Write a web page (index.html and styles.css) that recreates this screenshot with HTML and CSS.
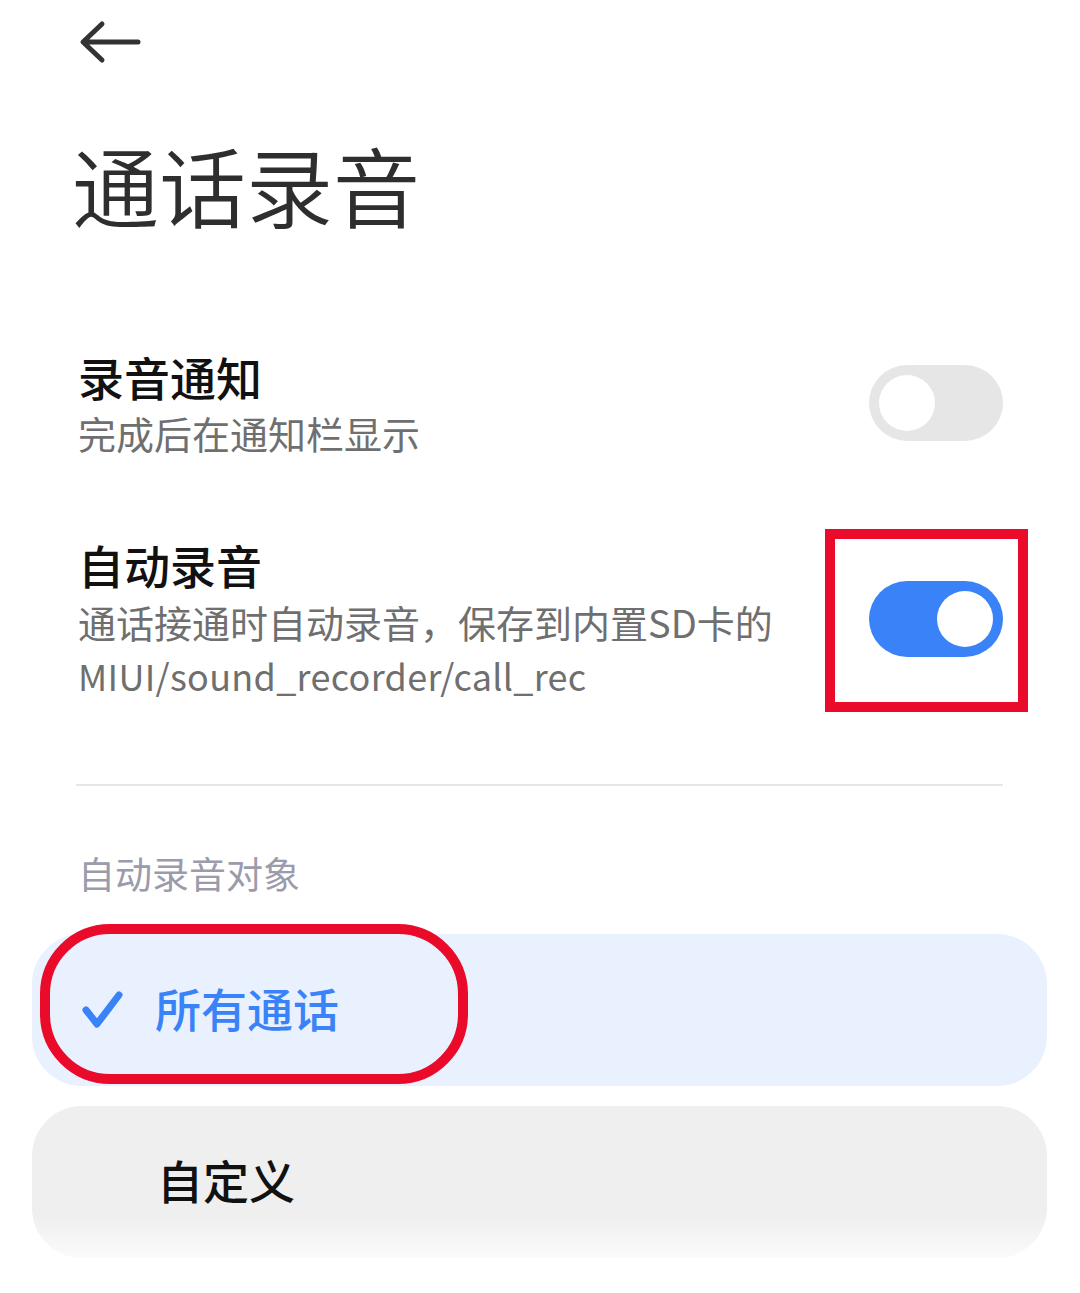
FILE: index.html
```html
<!DOCTYPE html>
<html lang="zh-CN">
<head>
  <meta charset="UTF-8">
  <meta name="viewport" content="width=device-width, initial-scale=1.0">
  <title>通话录音</title>
  <link rel="stylesheet" href="styles.css">
</head>
<body>
  <div class="page">
    <div class="topbar">
      <svg class="back" width="64" height="44" viewBox="0 0 64 44">
        <path d="M60 22 H6 M24 4 L5 22 L24 40" fill="none" stroke="#333" stroke-width="5" stroke-linecap="round" stroke-linejoin="round"/>
      </svg>
    </div>
    <h1 class="title">通话录音</h1>

    <div class="setting first">
      <div class="setting-text">
        <div class="setting-name">录音通知</div>
        <div class="setting-desc">完成后在通知栏显示</div>
      </div>
      <div class="switch"><span class="knob"></span></div>
    </div>

    <div class="setting second">
      <div class="setting-text">
        <div class="setting-name">自动录音</div>
        <div class="setting-desc">通话接通时自动录音，保存到内置SD卡的<br><span class="path">MIUI/sound_recorder/call_rec</span></div>
      </div>
      <div class="switch on">
        <span class="knob"></span>
        <span class="mark-box"></span>
      </div>
    </div>

    <div class="divider"></div>

    <div class="group-label">自动录音对象</div>

    <div class="options">
      <div class="option selected">
        <svg class="check" width="44" height="40" viewBox="0 0 44 40">
          <path d="M5 20 L16 34 L38 5" fill="none" stroke="#3a82f7" stroke-width="7" stroke-linecap="round" stroke-linejoin="round"/>
        </svg>
        <span class="option-label">所有通话</span>
        <span class="mark-oval"></span>
      </div>
      <div class="option">
        <span class="option-label">自定义</span>
      </div>
    </div>
  </div>
  <div class="fade"></div>
</body>
</html>
```

FILE: styles.css
```css
body {
  margin: 0;
  padding: 0;
  background: #fff;
  font-family: "Noto Sans CJK SC", "Noto Sans", sans-serif;
  color: #111;
  overflow: hidden;
}
.page {
  width: 1080px;
  height: 1293px;
}
.topbar {
  padding: 20px 0 0 78px;
  height: 50px;
}
.back {
  display: block;
}
.title {
  margin: 54px 0 0 72px;
  font-size: 87px;
  font-weight: 350;
  line-height: 120px;
  color: #2e2e2e;
}
.setting {
  display: flex;
  align-items: center;
  justify-content: space-between;
  padding: 0 77px 0 78px;
}
.setting.first {
  margin-top: 103px;
}
.setting.second {
  margin-top: 77px;
}
.setting-name {
  font-size: 46px;
  font-weight: 500;
  line-height: 58px;
  color: #111;
}
.setting-desc {
  font-size: 38px;
  line-height: 51px;
  color: #6f6f6f;
  margin-top: 2px;
}
.second .setting-desc {
  line-height: 53px;
}
.setting-desc .path {
  font-size: 36px;
  letter-spacing: 0.3px;
}
.switch {
  position: relative;
  flex: none;
  width: 134px;
  height: 76px;
  border-radius: 38px;
  background: #e6e6e6;
  display: flex;
  align-items: center;
  padding: 0 10px;
  box-sizing: border-box;
}
.switch.on {
  background: #3a82f7;
  justify-content: flex-end;
}
.knob {
  width: 56px;
  height: 56px;
  border-radius: 50%;
  background: #fff;
}
.mark-box {
  position: absolute;
  left: -44px;
  top: -52px;
  width: 203px;
  height: 183px;
  border: 10px solid #ea0a2a;
  box-sizing: border-box;
}
.divider {
  margin: 82px 77px 0 76px;
  height: 2px;
  background: #e6e6e6;
}
.group-label {
  margin: 59px 0 0 78px;
  font-size: 37px;
  line-height: 56px;
  color: #9b9bab;
}
.options {
  margin: 33px 33px 0 32px;
  display: flex;
  flex-direction: column;
  gap: 20px;
}
.option {
  position: relative;
  height: 152px;
  border-radius: 50px;
  background: #efefef;
  display: flex;
  align-items: center;
  padding-left: 125px;
}
.option.selected {
  background: #e8f1fd;
  padding-left: 49px;
}
.check {
  margin-right: 30px;
  margin-top: 0;
}
.option-label {
  font-size: 46px;
  font-weight: 500;
  color: #111;
  margin-top: -6px;
}
.option.selected .option-label {
  color: #3a82f7;
}
.mark-oval {
  position: absolute;
  left: 8px;
  top: -10px;
  width: 428px;
  height: 160px;
  border: 10px solid #ea0a2a;
  border-radius: 70px;
  box-sizing: border-box;
}
.fade {
  position: absolute;
  left: 0;
  top: 1215px;
  width: 1080px;
  height: 78px;
  background: linear-gradient(to bottom, rgba(255,255,255,0), #fff 75%);
}
```
